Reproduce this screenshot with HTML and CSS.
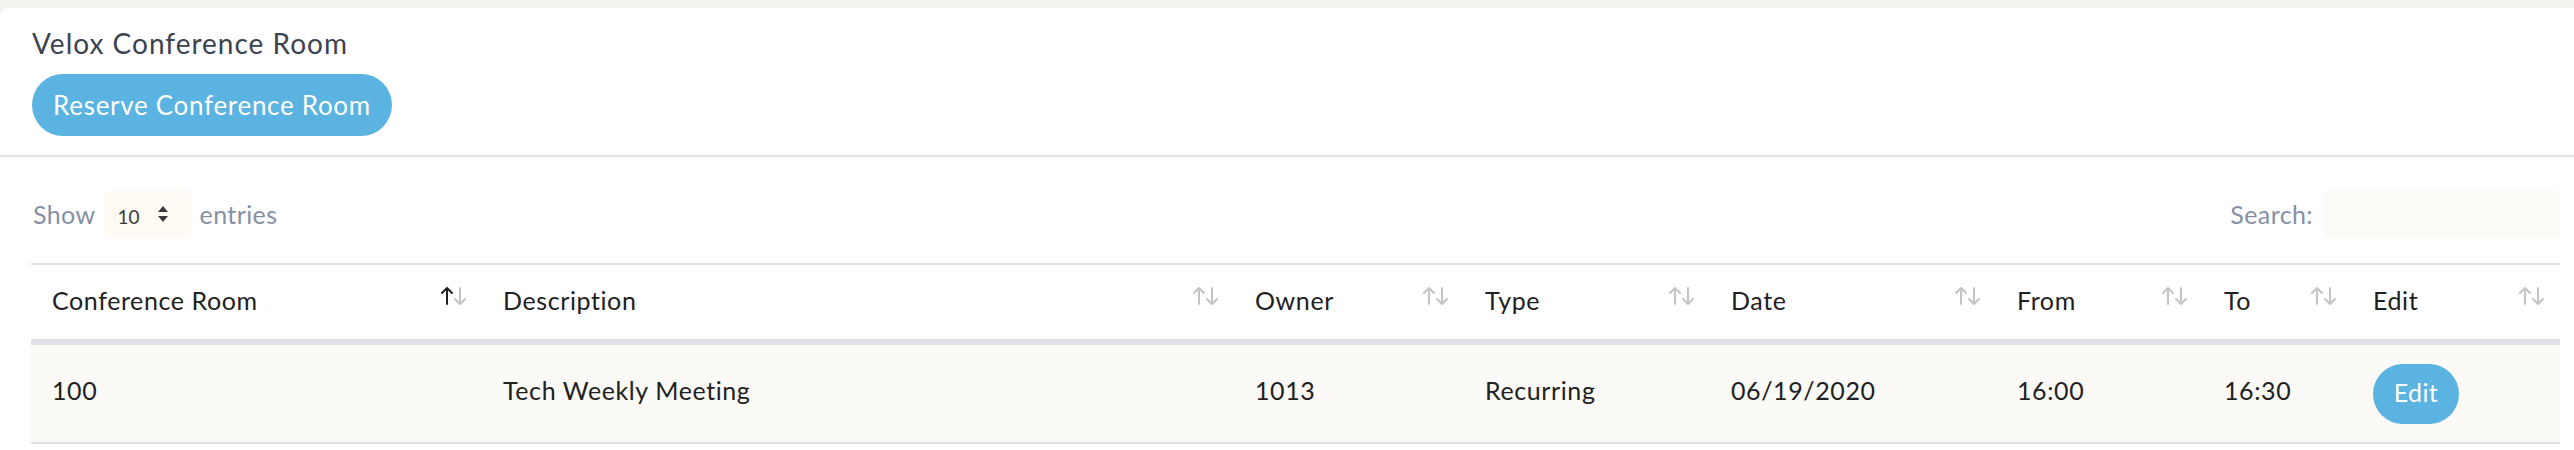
FILE: index.html
```html
<!DOCTYPE html>
<html lang="en">
<head>
<meta charset="utf-8">
<title>Velox Conference Room</title>
<link rel="stylesheet" href="styles.css">
</head>
<body>
<div class="card">
  <div class="card-header">
    <h1 class="title">Velox Conference Room</h1>
    <button class="btn-pill btn-reserve">Reserve Conference Room</button>
  </div>
  <div class="card-body">
    <div class="controls">
      <label class="length">Show
        <span class="select"><span class="select-val">10</span>
          <svg class="select-arrows" width="12" height="18" viewBox="0 0 12 18"><path d="M1 7 L6 1 L11 7 Z M1 11 L6 17 L11 11 Z" fill="#3b3b3b"/></svg>
        </span>
        entries</label>
      <label class="search">Search: <span class="search-input"></span></label>
    </div>
    <table class="grid">
      <colgroup>
        <col class="c1"><col class="c2"><col class="c3"><col class="c4"><col class="c5"><col class="c6"><col class="c7"><col class="c8">
      </colgroup>
      <thead>
        <tr>
          <th><div class="th-in"><span>Conference Room</span><svg class="sort" viewBox="0 0 28 20"><g fill="none" stroke-width="2" stroke-linecap="round" stroke-linejoin="round"><path d="M7 18 V2 M2 7 L7 2 L12 7" stroke="#1e1e1e"/><path d="M20 2 V18 M15 13 L20 18 L25 13" stroke="#c4c4c4"/></g></svg></div></th>
          <th><div class="th-in"><span>Description</span><svg class="sort" viewBox="0 0 28 20"><g fill="none" stroke="#c4c4c4" stroke-width="2" stroke-linecap="round" stroke-linejoin="round"><path d="M7 18 V2 M2 7 L7 2 L12 7"/><path d="M20 2 V18 M15 13 L20 18 L25 13"/></g></svg></div></th>
          <th><div class="th-in"><span>Owner</span><svg class="sort" viewBox="0 0 28 20"><g fill="none" stroke="#c4c4c4" stroke-width="2" stroke-linecap="round" stroke-linejoin="round"><path d="M7 18 V2 M2 7 L7 2 L12 7"/><path d="M20 2 V18 M15 13 L20 18 L25 13"/></g></svg></div></th>
          <th><div class="th-in"><span>Type</span><svg class="sort" viewBox="0 0 28 20"><g fill="none" stroke="#c4c4c4" stroke-width="2" stroke-linecap="round" stroke-linejoin="round"><path d="M7 18 V2 M2 7 L7 2 L12 7"/><path d="M20 2 V18 M15 13 L20 18 L25 13"/></g></svg></div></th>
          <th><div class="th-in"><span>Date</span><svg class="sort" viewBox="0 0 28 20"><g fill="none" stroke="#c4c4c4" stroke-width="2" stroke-linecap="round" stroke-linejoin="round"><path d="M7 18 V2 M2 7 L7 2 L12 7"/><path d="M20 2 V18 M15 13 L20 18 L25 13"/></g></svg></div></th>
          <th><div class="th-in"><span>From</span><svg class="sort" viewBox="0 0 28 20"><g fill="none" stroke="#c4c4c4" stroke-width="2" stroke-linecap="round" stroke-linejoin="round"><path d="M7 18 V2 M2 7 L7 2 L12 7"/><path d="M20 2 V18 M15 13 L20 18 L25 13"/></g></svg></div></th>
          <th><div class="th-in"><span>To</span><svg class="sort" viewBox="0 0 28 20"><g fill="none" stroke="#c4c4c4" stroke-width="2" stroke-linecap="round" stroke-linejoin="round"><path d="M7 18 V2 M2 7 L7 2 L12 7"/><path d="M20 2 V18 M15 13 L20 18 L25 13"/></g></svg></div></th>
          <th><div class="th-in"><span>Edit</span><svg class="sort" viewBox="0 0 28 20"><g fill="none" stroke="#c4c4c4" stroke-width="2" stroke-linecap="round" stroke-linejoin="round"><path d="M7 18 V2 M2 7 L7 2 L12 7"/><path d="M20 2 V18 M15 13 L20 18 L25 13"/></g></svg></div></th>
        </tr>
      </thead>
      <tbody>
        <tr>
          <td>100</td>
          <td>Tech Weekly Meeting</td>
          <td>1013</td>
          <td>Recurring</td>
          <td>06/19/2020</td>
          <td>16:00</td>
          <td>16:30</td>
          <td class="td-edit"><button class="btn-pill btn-edit">Edit</button></td>
        </tr>
      </tbody>
    </table>
  </div>
</div>
</body>
</html>
```

FILE: styles.css
```css
html, body {
  margin: 0;
  padding: 0;
}
body {
  background: #f3f2ee;
  padding-top: 8px;
  font-family: Lato, "Noto Sans", sans-serif;
  color: #212121;
}
.card {
  background: #ffffff;
  border-top-left-radius: 8px;
  height: 442px;
}
.card-header {
  padding: 17px 31px 19px 32px;
  border-bottom: 2px solid #e4e4e4;
}
.title {
  margin: 0;
  font-weight: 400;
  font-size: 28px;
  line-height: 36px;
  letter-spacing: 1px;
  color: #3c4350;
}
.btn-pill {
  border: none;
  background: #5ab3e0;
  color: #ffffff;
  font-family: inherit;
  cursor: pointer;
}
.btn-reserve {
  margin-top: 13px;
  height: 62px;
  width: 360px;
  border-radius: 31px;
  font-size: 26px;
  letter-spacing: 0.7px;
  padding: 0;
}
.card-body {
  padding: 33px 14px 0 31px;
}
.controls {
  display: flex;
  justify-content: space-between;
  align-items: center;
  height: 48px;
  margin-bottom: 25px;
  color: #8591a3;
  font-size: 25px;
  letter-spacing: 0.4px;
}
.length, .search {
  display: flex;
  align-items: center;
  gap: 9px;
}
.length { padding-left: 2px; }
.select {
  display: flex;
  align-items: center;
  justify-content: space-between;
  width: 86px;
  height: 48px;
  box-sizing: border-box;
  padding: 0 22px 0 13px;
  background: #fffbf4;
  border-radius: 6px;
  color: #3a3a3a;
  font-size: 19px;
  letter-spacing: 0;
}
.select-val { padding-top: 4px; }
.search { gap: 10px; }
.search-input {
  display: block;
  width: 237px;
  height: 48px;
  background: #fcfbf7;
  border-radius: 6px;
}
.grid {
  width: 2529px;
  border-collapse: collapse;
  table-layout: fixed;
  font-size: 25px;
  letter-spacing: 0.6px;
}
.c1 { width: 451px; }
.c2 { width: 752px; }
.c3 { width: 230px; }
.c4 { width: 246px; }
.c5 { width: 286px; }
.c6 { width: 207px; }
.c7 { width: 149px; }
.c8 { width: 208px; }
.grid th {
  font-weight: 400;
  text-align: left;
  border-top: 2px solid #dee2e6;
  border-bottom: 6px solid #dee2e6;
  height: 74px;
  padding: 0 14px 0 21px;
  vertical-align: middle;
}
.th-in {
  display: flex;
  justify-content: space-between;
  align-items: center;
}
.th-in span { padding-bottom: 4px; }
.sort {
  width: 28px;
  height: 20px;
  margin-top: -12px;
}
.grid td {
  background: #fbfaf6;
  height: 90px;
  padding: 0 14px 7px 21px;
  border-bottom: 2px solid #dee2e6;
  vertical-align: middle;
}
.grid td.td-edit {
  padding-bottom: 0;
  height: 97px;
}
.btn-edit {
  display: block;
  width: 86px;
  height: 60px;
  border-radius: 30px;
  font-size: 25px;
  letter-spacing: 0.4px;
  padding: 0 0 3px;
}
```
